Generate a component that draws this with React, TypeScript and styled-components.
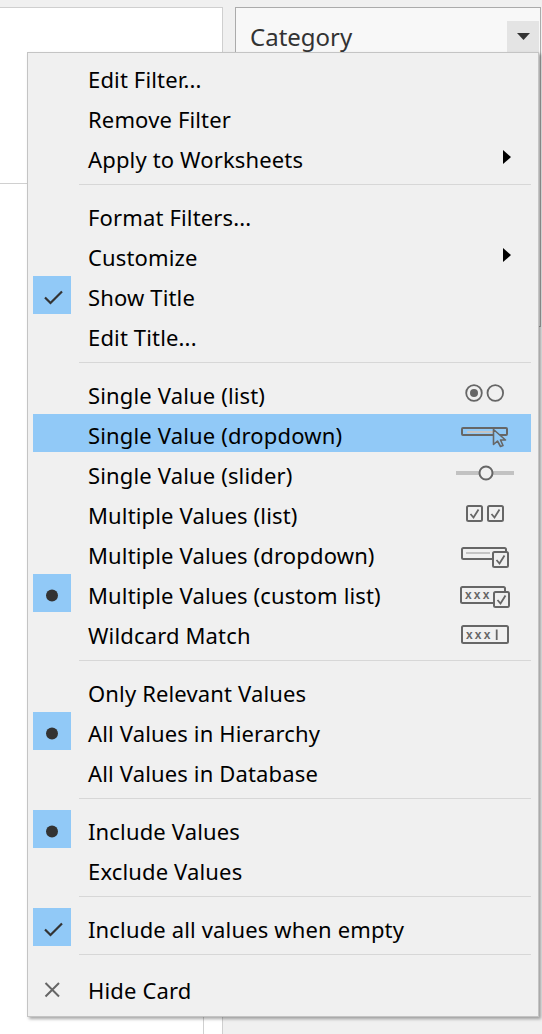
import React from 'react';
import styled, { createGlobalStyle } from 'styled-components';

const GlobalStyle = createGlobalStyle`
  html, body {
    margin: 0;
    padding: 0;
    background: #f0f0f0;
  }
  body {
    font-family: "Noto Sans", "Liberation Sans", sans-serif;
  }
`;

const HIGHLIGHT = '#91c9f7';
const ICON = '#666666';

const Page = styled.div`
  position: relative;
  width: 542px;
  height: 1034px;
  overflow: hidden;
  display: flex;
  align-items: flex-start;
  padding-top: 7px;
  box-sizing: border-box;
  background: #f0f0f0;
`;

const LeftPane = styled.div`
  width: 222px;
  height: 1027px;
  flex: none;
  display: flex;
  flex-direction: column;
  background: #ffffff;
  border-top: 1px solid #cfcfcf;
  border-right: 1px solid #cfcfcf;
`;

const TopSection = styled.div`
  height: 175px;
  border-bottom: 1px solid #d0d0d0;
`;

const LowerSection = styled.div`
  flex: 1;
  display: flex;
`;

const InnerPane = styled.div`
  width: 203px;
  border-right: 1px solid #d0d0d0;
`;

const Card = styled.div`
  margin-left: 12px;
  width: 306px;
  height: 320px;
  box-sizing: border-box;
  flex: none;
  background: #f8f8f8;
  border: 1px solid #ababab;
`;

const CardHeader = styled.div`
  display: flex;
  align-items: flex-start;
  padding: 13px 1px 0 14px;
`;

const CardTitle = styled.div`
  flex: 1;
  font-size: 24px;
  line-height: 32px;
  color: #333333;
`;

const DropButton = styled.div`
  width: 32px;
  height: 36px;
  background: #e4e4e4;
  display: flex;
  justify-content: center;
  padding-top: 12px;
  box-sizing: border-box;
`;

const Menu = styled.div`
  position: absolute;
  left: 27px;
  top: 52px;
  width: 512px;
  height: 965px;
  box-sizing: border-box;
  display: flex;
  flex-direction: column;
  padding: 4px 0 7px;
  background: #f0f0f0;
  border: 1px solid #c4c4c4;
  box-shadow: 2px 2px 3px rgba(0, 0, 0, 0.35);
`;

const Item = styled.div<{ $active?: boolean }>`
  display: flex;
  align-items: center;
  height: 38px;
  flex: none;
  margin: 1px 7px 1px 5px;
  background: ${(p) => (p.$active ? HIGHLIGHT : 'transparent')};
`;

const Mark = styled.div<{ $on?: boolean }>`
  width: 38px;
  height: 38px;
  flex: none;
  background: ${(p) => (p.$on ? HIGHLIGHT : 'transparent')};
  svg {
    display: block;
  }
`;

const Label = styled.div`
  flex: 1;
  margin-left: 17px;
  padding-top: 5px;
  font-size: 22px;
  letter-spacing: 0.15px;
  line-height: 33px;
  color: #000000;
  white-space: nowrap;
`;

const Slot = styled.div`
  width: 60px;
  height: 32px;
  flex: none;
  margin-right: 16px;
  svg {
    display: block;
  }
`;

const Separator = styled.div<{ $extra?: number }>`
  height: 1px;
  flex: none;
  background: #d7d7d7;
  margin: 7px 7px ${(p) => 10 + (p.$extra || 0)}px 51px;
`;

type MarkKind = 'check' | 'dot' | 'close' | undefined;
type IconKind =
  | 'arrow'
  | 'radio'
  | 'dropdown'
  | 'slider'
  | 'checks'
  | 'multiDrop'
  | 'customList'
  | 'wildcard'
  | undefined;

function MarkGlyph({ kind }: { kind: MarkKind }) {
  if (!kind) return null;
  return (
    <svg width="38" height="38" viewBox="0 0 38 38">
      {kind === 'check' && (
        <path d="M12 21.5 L17.5 27 L29 15.5" fill="none" stroke="#333" strokeWidth="2.2" />
      )}
      {kind === 'dot' && <circle cx="19" cy="21.5" r="6" fill="#333" />}
      {kind === 'close' && (
        <path d="M12.5 14 L26 27.5 M26 14 L12.5 27.5" stroke={ICON} strokeWidth="2" />
      )}
    </svg>
  );
}

function Box({ x, y, fill }: { x: number; y: number; fill?: string }) {
  return (
    <g>
      <rect x={x} y={y} width="15" height="15" rx="1.5" fill={fill || 'none'} stroke={ICON} strokeWidth="2" />
      <path
        d={`M${x + 3.5} ${y + 8} L${x + 6.5} ${y + 11.5} L${x + 11.5} ${y + 3.5}`}
        fill="none"
        stroke={ICON}
        strokeWidth="1.8"
      />
    </g>
  );
}

function Xxx({ x, y }: { x: number; y: number }) {
  return (
    <text
      x={x}
      y={y}
      fontFamily="Liberation Sans, sans-serif"
      fontWeight="700"
      fontSize="12"
      letterSpacing="2.2"
      fill={ICON}
    >
      xxx
    </text>
  );
}

function SlotIcon({ kind, bg }: { kind: IconKind; bg: string }) {
  if (!kind) return null;
  return (
    <svg width="60" height="32" viewBox="0 0 60 32">
      {kind === 'arrow' && <polygon points="48,9 56,16 48,23" fill="#000" />}
      {kind === 'radio' && (
        <g>
          <circle cx="19" cy="16" r="7.8" fill="none" stroke={ICON} strokeWidth="1.8" />
          <circle cx="19" cy="16" r="4" fill={ICON} />
          <circle cx="40.3" cy="16" r="7.8" fill="none" stroke={ICON} strokeWidth="1.8" />
        </g>
      )}
      {kind === 'dropdown' && (
        <g>
          <rect x="7" y="11" width="45" height="7" rx="1" fill="none" stroke={ICON} strokeWidth="2" />
          <line x1="12" y1="15" x2="38" y2="15" stroke="#c4c4c4" strokeWidth="2" />
          <path
            d="M38.5 12.5 L38.5 27.5 L42.5 24 L45.5 29.5 L48 28.5 L45.5 23 L50.5 23 Z"
            fill={bg}
            stroke={ICON}
            strokeWidth="1.6"
            strokeLinejoin="round"
          />
        </g>
      )}
      {kind === 'slider' && (
        <g>
          <line x1="1" y1="16" x2="59" y2="16" stroke="#c2c2c2" strokeWidth="4" />
          <circle cx="31" cy="16" r="6.5" fill="#f0f0f0" stroke={ICON} strokeWidth="2" />
        </g>
      )}
      {kind === 'checks' && (
        <g>
          <Box x={12} y={9} />
          <Box x={33} y={9} />
        </g>
      )}
      {kind === 'multiDrop' && (
        <g>
          <rect x="7" y="11" width="44" height="11" rx="1.5" fill="none" stroke={ICON} strokeWidth="2" />
          <line x1="11" y1="16" x2="35" y2="16" stroke="#c4c4c4" strokeWidth="2" />
          <Box x={38} y={15} fill="#f0f0f0" />
        </g>
      )}
      {kind === 'customList' && (
        <g>
          <rect x="6" y="10" width="44" height="16" rx="1.5" fill="none" stroke={ICON} strokeWidth="2" />
          <Xxx x={10} y={21.5} />
          <Box x={39} y={15} fill="#f0f0f0" />
        </g>
      )}
      {kind === 'wildcard' && (
        <g>
          <rect x="7" y="9" width="46" height="17" rx="1.5" fill="none" stroke={ICON} strokeWidth="2" />
          <Xxx x={11} y={21.5} />
          <line x1="41.7" y1="12.5" x2="41.7" y2="23" stroke={ICON} strokeWidth="1.8" />
        </g>
      )}
    </svg>
  );
}

interface Entry {
  label: string;
  mark?: MarkKind;
  icon?: IconKind;
  active?: boolean;
}

const groups: Entry[][] = [
  [
    { label: 'Edit Filter...' },
    { label: 'Remove Filter' },
    { label: 'Apply to Worksheets', icon: 'arrow' },
  ],
  [
    { label: 'Format Filters...' },
    { label: 'Customize', icon: 'arrow' },
    { label: 'Show Title', mark: 'check' },
    { label: 'Edit Title...' },
  ],
  [
    { label: 'Single Value (list)', icon: 'radio' },
    { label: 'Single Value (dropdown)', icon: 'dropdown', active: true },
    { label: 'Single Value (slider)', icon: 'slider' },
    { label: 'Multiple Values (list)', icon: 'checks' },
    { label: 'Multiple Values (dropdown)', icon: 'multiDrop' },
    { label: 'Multiple Values (custom list)', icon: 'customList', mark: 'dot' },
    { label: 'Wildcard Match', icon: 'wildcard' },
  ],
  [
    { label: 'Only Relevant Values' },
    { label: 'All Values in Hierarchy', mark: 'dot' },
    { label: 'All Values in Database' },
  ],
  [
    { label: 'Include Values', mark: 'dot' },
    { label: 'Exclude Values' },
  ],
  [{ label: 'Include all values when empty', mark: 'check' }],
  [{ label: 'Hide Card', mark: 'close' }],
];

function MenuItem({ entry }: { entry: Entry }) {
  const bg = entry.active ? HIGHLIGHT : '#f0f0f0';
  return (
    <Item $active={entry.active}>
      <Mark $on={entry.mark === 'check' || entry.mark === 'dot'}>
        <MarkGlyph kind={entry.mark} />
      </Mark>
      <Label>{entry.label}</Label>
      <Slot>
        <SlotIcon kind={entry.icon} bg={bg} />
      </Slot>
    </Item>
  );
}

export default function App() {
  return (
    <>
      <GlobalStyle />
      <Page>
        <LeftPane>
          <TopSection />
          <LowerSection>
            <InnerPane />
          </LowerSection>
        </LeftPane>
        <Card>
          <CardHeader>
            <CardTitle>Category</CardTitle>
            <DropButton>
              <svg width="13" height="7" viewBox="0 0 13 7">
                <polygon points="0,0 13,0 6.5,7" fill="#333" />
              </svg>
            </DropButton>
          </CardHeader>
        </Card>
        <Menu>
          {groups.map((group, gi) => (
            <React.Fragment key={gi}>
              {gi > 0 && <Separator $extra={gi === groups.length - 1 ? 3 : 0} />}
              {group.map((entry) => (
                <MenuItem key={entry.label} entry={entry} />
              ))}
            </React.Fragment>
          ))}
        </Menu>
      </Page>
    </>
  );
}
